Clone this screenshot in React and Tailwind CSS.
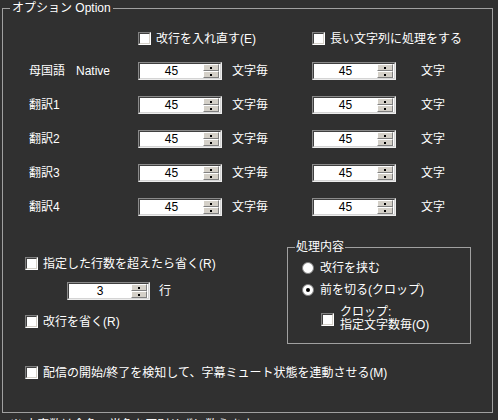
const SpinBtn = () => (
  <div className="flex h-[7px] w-[16px] items-center justify-center border border-t-white border-l-white border-r-[#808080] border-b-[#808080] bg-[#d4d0c8]">
    <div className="h-[2px] w-[2px] bg-black" />
  </div>
);

const Spin = ({ value, className }) => (
  <div
    className={`flex h-[18px] border border-t-[#8a8a8a] border-l-[#8a8a8a] border-r-[#ececec] border-b-[#ececec] ${className}`}
  >
    <div className="flex flex-1 border border-t-[#404040] border-l-[#404040] border-r-[#d4d4d4] border-b-[#d4d4d4] bg-white">
      <span className="flex-1 text-center text-[12px] leading-[14px] text-black">
        {value}
      </span>
      <div className="mr-[1px] flex flex-col">
        <SpinBtn />
        <SpinBtn />
      </div>
    </div>
  </div>
);

const Check = () => (
  <div className="h-[13px] w-[13px] shrink-0 border border-t-[#808080] border-l-[#808080] border-r-white border-b-white">
    <div className="h-full w-full border border-t-[#404040] border-l-[#404040] border-r-[#d4d0c8] border-b-[#d4d0c8] bg-white" />
  </div>
);

const Radio = ({ checked }) => (
  <div className="flex h-[12px] w-[12px] shrink-0 items-center justify-center rounded-full border border-[#808080] bg-white">
    {checked && <div className="h-[4px] w-[4px] rounded-full bg-black" />}
  </div>
);

const rows = ["母国語", "翻訳1", "翻訳2", "翻訳3", "翻訳4"];

export default function App() {
  return (
    <div className="h-[420px] w-[498px] overflow-hidden bg-[#303030] font-['Liberation_Sans','Noto_Sans_CJK_JP',sans-serif] text-[12px] leading-[14px] text-white">
      <div className="relative ml-[2px] mt-[8px] box-border h-[405px] w-[491px] border border-[#a0a0a0]">
        <span className="absolute left-[7px] top-[-8px] bg-[#303030] px-[2px]">
          オプション Option
        </span>

        {/* top checkboxes */}
        <div className="ml-[135px] mt-[23px] flex h-[13px] items-center">
          <div className="flex w-[174px] items-center gap-[5px]">
            <Check />
            <span>改行を入れ直す(E)</span>
          </div>
          <div className="flex items-center gap-[5px]">
            <Check />
            <span>長い文字列に処理をする</span>
          </div>
        </div>

        {/* rows */}
        <div className="mt-[17px] flex flex-col gap-[16px]">
          {rows.map((label, i) => (
            <div key={label} className="flex h-[18px] items-center">
              <div className="flex w-[135px] pl-[26px]">
                <span>{label}</span>
                {i === 0 && <span className="ml-[11px]">Native</span>}
              </div>
              <Spin value="45" className="w-[84px]" />
              <span className="ml-[10px] w-[80px]">文字毎</span>
              <Spin value="45" className="w-[84px]" />
              <span className="ml-[25px]">文字</span>
            </div>
          ))}
        </div>

        {/* lower section */}
        <div className="mt-[31px] flex items-start">
          <div className="w-[284px] pt-[10px]">
            <div className="ml-[22px] flex h-[13px] items-center gap-[5px]">
              <Check />
              <span>指定した行数を超えたら省く(R)</span>
            </div>
            <div className="ml-[64px] mt-[12px] flex h-[18px] items-center">
              <Spin value="3" className="w-[83px]" />
              <span className="ml-[9px]">行</span>
            </div>
            <div className="ml-[22px] mt-[15px] flex h-[13px] items-center gap-[5px]">
              <Check />
              <span>改行を省く(R)</span>
            </div>
          </div>

          <div className="relative box-border h-[97px] w-[184px] border border-[#a0a0a0]">
            <span className="absolute left-[7px] top-[-8px] bg-[#303030] px-[1px]">
              処理内容
            </span>
            <div className="ml-[14px] mt-[14px] flex h-[12px] items-center gap-[6px]">
              <Radio />
              <span>改行を挟む</span>
            </div>
            <div className="ml-[14px] mt-[10px] flex h-[12px] items-center gap-[6px]">
              <Radio checked />
              <span>前を切る(クロップ)</span>
            </div>
            <div className="ml-[33px] mt-[10px] flex items-center gap-[6px]">
              <Check />
              <div className="leading-[13px]">
                <div>クロップ:</div>
                <div>指定文字数毎(O)</div>
              </div>
            </div>
          </div>
        </div>

        <div className="ml-[22px] mt-[22px] flex h-[13px] items-center gap-[5px]">
          <Check />
          <span>配信の開始/終了を検知して、字幕ミュート状態を連動させる(M)</span>
        </div>
      </div>

      <div className="mt-[5px] pl-[10px]">
        ※ 文字数は全角・半角を区別せずに数えます。
      </div>
    </div>
  );
}
